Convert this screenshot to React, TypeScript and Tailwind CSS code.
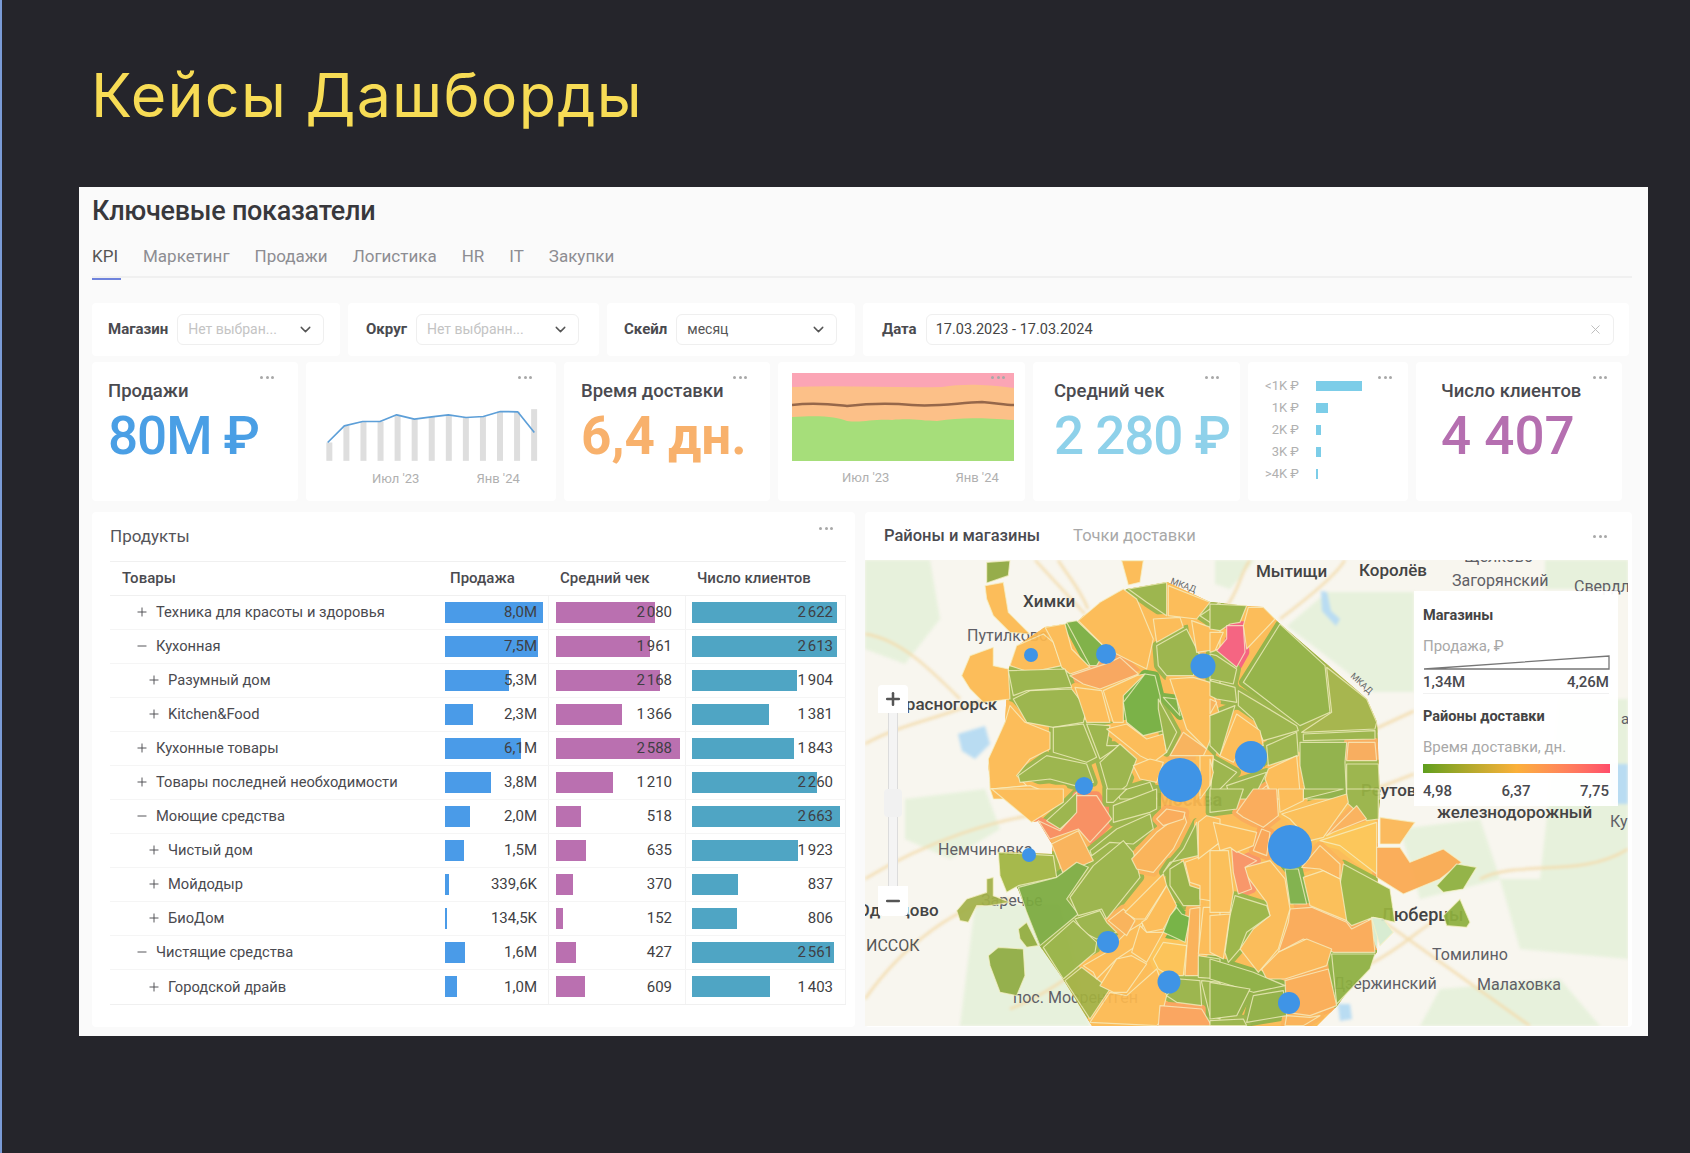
import { ChevronDown, Minus, Plus, X } from "lucide-react";

type Row = { name: string; level: 0 | 1; open?: boolean; sale: string; saleW: number; check: string; checkW: number; clients: string; clientsW: number };

const rows: Row[] = [
  { name: "Техника для красоты и здоровья", level: 0, sale: "8,0М", saleW: 98, check: "2 080", checkW: 99, clients: "2 622", clientsW: 145 },
  { name: "Кухонная", level: 0, open: true, sale: "7,5М", saleW: 93, check: "1 961", checkW: 94, clients: "2 613", clientsW: 145 },
  { name: "Разумный дом", level: 1, sale: "5,3М", saleW: 64, check: "2 168", checkW: 104, clients: "1 904", clientsW: 105 },
  { name: "Kitchen&Food", level: 1, sale: "2,3М", saleW: 28, check: "1 366", checkW: 66, clients: "1 381", clientsW: 77 },
  { name: "Кухонные товары", level: 0, sale: "6,1М", saleW: 76, check: "2 588", checkW: 124, clients: "1 843", clientsW: 102 },
  { name: "Товары последней необходимости", level: 0, sale: "3,8М", saleW: 46, check: "1 210", checkW: 57, clients: "2 260", clientsW: 125 },
  { name: "Моющие средства", level: 0, open: true, sale: "2,0М", saleW: 25, check: "518", checkW: 25, clients: "2 663", clientsW: 148 },
  { name: "Чистый дом", level: 1, sale: "1,5М", saleW: 19, check: "635", checkW: 30, clients: "1 923", clientsW: 106 },
  { name: "Мойдодыр", level: 1, sale: "339,6K", saleW: 4, check: "370", checkW: 17, clients: "837", clientsW: 46 },
  { name: "БиоДом", level: 1, sale: "134,5K", saleW: 2, check: "152", checkW: 7, clients: "806", clientsW: 45 },
  { name: "Чистящие средства", level: 0, open: true, sale: "1,6М", saleW: 20, check: "427", checkW: 20, clients: "2 561", clientsW: 142 },
  { name: "Городской драйв", level: 1, sale: "1,0М", saleW: 12, check: "609", checkW: 29, clients: "1 403", clientsW: 78 },
];

const O = "#fdb94f";
const Y = "#fdc14f";
const A = "#fba853";
const G = "#97b243";
const D = "#78ad3e";

type Shape = [string, string];

const topLeft: Shape[] = [
  ["#8fa83f", "110,10 180,5 175,50 110,72"],
  [O, "105,80 160,70 175,160 240,225 180,220 130,170 110,120"],
  [O, "515,5 580,5 570,70 535,78"],
  [O, "35,350 60,290 130,265 130,320 175,330 180,420 100,430 60,390"],
  [O, "180,320 200,260 280,225 310,250 335,320 240,340"],
  [O, "285,205 345,195 365,270 420,325 360,345 335,325 310,250"],
  [D, "350,190 380,185 470,270 440,320 420,320"],
  [O, "385,185 450,130 520,90 560,120 610,240 590,330 510,290 470,270"],
  ["#f9a357", "360,350 480,310 510,295 565,345 450,390 400,375"],
  [G, "535,90 650,70 650,170 590,130"],
  [O, "655,80 780,130 740,180 655,170"],
  [O, "610,180 690,175 700,205 620,250"],
  [G, "620,260 710,210 750,290 730,350 650,350 625,320"],
  [O, "725,185 810,215 810,270 740,280"],
  [G, "750,170 810,130 810,210"],
  [G, "175,335 345,330 365,385 230,395 190,410"],
  [G, "190,420 240,395 365,390 410,450 400,490 310,505 230,490"],
  [O, "180,440 225,490 300,520 300,570 240,600 200,650 230,680 120,690 115,600 165,490"],
  [O, "375,385 455,395 480,490 410,490"],
  [O, "460,395 560,350 585,345 520,410 520,490 490,490"],
  ["#72ad3c", "520,430 585,345 615,350 630,410 640,515 580,530 530,490"],
  [G, "310,505 400,495 440,595 410,610 310,580"],
  [G, "410,495 480,500 470,560 510,560 450,600"],
  [G, "205,650 290,590 410,615 430,670 375,680 300,660 210,670"],
  [G, "450,610 510,555 560,600 530,680 480,720 470,680"],
  [O, "470,510 530,495 590,540 640,525 650,580 610,610 570,590"],
  [O, "550,620 600,600 640,610 620,670 570,660"],
  ["#f9b055", "660,590 700,520 770,570 760,590 700,590"],
  [O, "660,360 730,355 780,370 810,470 770,570 710,510"],
  [G, "625,420 680,520 650,580 625,450"],
  [D, "640,415 680,420 690,470"],
  [G, "780,360 810,360 810,420"],
  [G, "780,470 810,500 810,580"],
  [O, "750,590 790,590 780,680 750,720"],
  [O, "120,690 240,680 340,720 130,720"],
  [G, "500,700 600,670 620,720 510,720"],
];

const topRight: Shape[] = [
  [G, "0,135 110,140 90,190 60,195 30,215 0,210"],
  [O, "115,145 160,145 195,180 110,270 100,200"],
  ["#f55b7a", "50,200 100,200 105,280 80,325 20,275 50,240"],
  [O, "0,220 40,220 15,275 0,280"],
  ["#8fb03f", "100,370 210,195 345,320 360,460 270,500"],
  ["#a1b243", "350,325 470,420 500,490 495,510 275,520 365,460"],
  [G, "0,285 20,290 80,330 70,375 0,360"],
  [G, "0,365 75,385 80,430 20,420 0,410"],
  [G, "85,395 260,500 265,515 160,545 130,480 85,440"],
  [G, "280,525 495,515 495,540 280,545"],
  ["#8cae42", "270,550 410,550 405,610 410,720 290,720 270,620"],
  ["#f9a956", "415,550 495,550 500,605 410,605"],
  [G, "410,615 505,615 510,720 410,720"],
  [G, "0,470 75,440 30,590 0,560"],
  [O, "30,590 80,465 150,515 160,560 100,560 70,610"],
  ["#f9b055", "0,420 20,430 0,465"],
  [G, "170,560 260,520 265,590 175,620"],
  [O, "175,630 260,590 270,700 285,720 190,720 165,660"],
  [G, "10,600 80,640 50,670 0,720"],
  [G, "50,680 170,640 130,720 60,720"],
  [A, "120,720 170,680 190,720"],
  [O, "0,600 10,640 0,680"],
];

const bottomLeft: Shape[] = [
  [O, "125,0 340,0 340,40 245,100"],
  [G, "290,95 350,40 380,10 385,70 330,120"],
  ["#f88a5a", "380,20 440,20 485,90 420,160 385,120 300,150 265,95 330,125 380,70"],
  [G, "470,0 530,0 490,40 470,40"],
  [G, "490,50 620,0 620,60 600,70 490,100"],
  ["#fab052", "305,165 385,125 430,215 340,255"],
  [G, "420,185 500,120 600,75 610,120 550,165 480,160 425,200"],
  ["#a0b540", "145,190 310,200 320,265 205,290 170,310 150,260"],
  ["#7cab3f", "205,295 320,265 380,220 415,235 350,330 385,375 270,470 230,370"],
  [G, "360,325 430,230 520,155 550,190 570,265 470,390 455,360 385,380"],
  [G, "375,390 450,365 470,400 500,430 440,450 400,430"],
  [G, "280,475 370,395 440,460 435,490 340,570"],
  ["#a3b040", "345,575 395,535 480,600 420,690"],
  [O, "420,700 480,610 530,620 620,540 650,620 630,700 620,710"],
  [O, "400,530 470,490 530,430 580,400 560,470 500,510 440,570 430,550"],
  ["#fab052", "475,395 520,360 555,395 530,440"],
  [O, "525,370 640,255 650,290 585,390 555,390"],
  [O, "590,390 650,290 680,350 640,420 590,430 575,400"],
  ["#fbb050", "545,210 620,130 700,70 710,100 670,180 610,250 560,240"],
  [A, "620,90 650,60 705,70 700,90 640,110"],
  [G, "640,250 700,180 740,100 745,200 700,210 660,220"],
  ["#93b03f", "660,240 700,215 720,290 750,300 750,350 700,350 660,290"],
  ["#6fb03c", "680,355 695,375 720,385 705,460 640,430 660,380"],
  ["#fbaf51", "720,360 750,355 745,560 705,560 710,480"],
  [O, "570,410 590,430 640,430 590,520 545,490"],
  [Y, "610,510 640,460 710,470 700,560 660,560 625,540"],
  [O, "450,590 500,510 545,500 590,525 530,610 490,610"],
  [G, "650,620 690,570 750,575 755,650 680,640"],
  [G, "755,575 810,580 810,690 780,680 755,580"],
  [G, "745,500 810,510 810,570 745,565"],
  ["#fba057", "630,650 755,660 785,710 625,710"],
  [O, "705,220 745,205 810,160 810,340 750,330 750,290 720,280"],
  [O, "745,100 770,80 810,90 810,160 745,210"],
  [O, "760,355 810,355 810,500 745,495"],
  ["#a3b14a", "20,365 50,330 110,310 110,270 130,265 130,320 180,340 120,350 80,350 55,400 30,395"],
  ["#93ad40", "205,420 230,400 265,470 230,475 210,450"],
  ["#8fac43", "115,500 145,475 220,480 225,560 200,620 150,610 120,530"],
];

const bottomRight: Shape[] = [
  [G, "280,0 400,0 280,30"],
  [G, "410,0 505,0 505,90 470,95 410,40"],
  [G, "0,0 100,0 80,60 0,70"],
  [A, "80,70 130,0 200,0 205,80 160,115 100,85"],
  [O, "205,0 280,0 280,35 210,70"],
  ["#fcbc50", "215,75 410,15 415,40 340,145 300,155 240,90"],
  ["#fbae56", "350,140 440,50 470,90 370,130"],
  ["#fdc450", "330,155 500,100 500,255 390,170"],
  ["#fcb654", "510,85 615,100 570,165 510,165"],
  ["#fba950", "500,175 570,175 600,220 700,180 755,220 690,270 580,315 500,265"],
  ["#98b33f", "400,225 540,300 555,400 490,385 425,410 385,370 380,350"],
  ["#fcb150", "275,235 330,170 390,225 390,270 330,240"],
  ["#fcbc50", "280,265 340,245 390,270 410,395 300,350"],
  ["#7bae44", "225,240 265,240 290,345 240,345"],
  [A, "240,360 305,355 410,400 425,420 485,390 495,490 370,490 280,450 205,490 235,400"],
  ["#fcb450", "155,540 205,490 290,450 365,480 350,530 225,570 170,570"],
  ["#fbaa50", "225,575 355,540 380,650 300,680 230,670"],
  ["#8db040", "365,495 495,495 480,540 380,645"],
  ["#fcb950", "105,235 180,215 225,270 240,360 205,480 145,550 90,480 130,420 180,380 170,340 110,260"],
  ["#f99060", "65,180 140,215 105,235 125,300 85,315 70,250"],
  [O, "10,100 140,130 130,170 80,190 60,175 30,185"],
  ["#fcbc50", "0,185 55,185 70,310 60,370 0,370"],
  ["#97b340", "75,320 170,350 180,380 110,430 90,480 55,520 45,490 60,380"],
  ["#fcb950", "0,380 60,375 40,510 0,490"],
  ["#8aad3e", "0,510 50,525 130,550 225,590 130,610 0,570"],
  ["#8dad3f", "0,580 120,600 80,680 0,690"],
  ["#8dad3f", "130,620 220,605 230,680 110,700"],
  [G, "0,695 100,690 110,710 0,710"],
  ["#fbb050", "230,680 300,685 330,680 280,710 225,710"],
  ["#fba350", "155,120 180,130 170,200 130,185"],
  ["#8eb03e", "680,290 740,225 800,235 760,300 700,310"],
  ["#8eb03e", "700,380 750,330 780,400 770,415 710,410"],
  ["#d6ecd0", "485,385 520,390 550,430 510,470 495,420"],
];

const moscow =
  "1083,617 1127,590 1167,583 1210,603 1247,607 1263,608 1278,623 1367,700 1377,723 1380,800 1378,820 1377,953 1337,1007 1317,1027 1092,1027 1063,980 1040,947 1018,890 1005,870 998,853 1052,855 1052,845 1038,822 1032,823 992,790 988,767 1005,723 1008,672 1017,647 1045,628 1065,625 1078,622";

const pins = [
  [1031, 656, 7], [1106, 655, 10], [1203, 667, 12.5], [1180, 781, 22], [1084, 787, 9], [1251, 758, 16],
  [1029, 856, 7], [1108, 943, 11], [1169, 983, 11.5], [1290, 848, 22], [1289, 1004, 11],
];

const sparkline = [235, 185, 172, 172, 152, 165, 158, 152, 160, 157, 142, 143, 135];

function Dots({ className }: { className: string }) {
  return (
    <div className={`absolute flex gap-[2.5px] ${className}`}>
      <span className="h-[3px] w-[3px] rounded-full bg-[#a8a8a8]" />
      <span className="h-[3px] w-[3px] rounded-full bg-[#a8a8a8]" />
      <span className="h-[3px] w-[3px] rounded-full bg-[#a8a8a8]" />
    </div>
  );
}

function Select({ text, muted, width }: { text: string; muted?: boolean; width: string }) {
  return (
    <div className={`flex h-[31px] items-center justify-between rounded-md border border-[#efefef] bg-white pl-[10px] pr-[9px] ${width}`}>
      <span className={`text-[14px] ${muted ? "text-[#c4c4c4]" : "text-[#555]"}`}>{text}</span>
      <ChevronDown size={17} strokeWidth={2} className="text-[#555]" />
    </div>
  );
}

function Bar({ label, width, color, left, right }: { label: string; width: number; color: string; left: string; right: string }) {
  return (
    <div className="relative flex h-full items-center justify-end border-r border-[#f3f3f3]">
      <div className={`absolute top-[6px] h-[21px] ${left} ${color}`} style={{ width }} />
      <span className={`relative text-[15px] text-[#3f3f44] [word-spacing:-2px] ${right}`}>{label}</span>
    </div>
  );
}

function ProductTable() {
  return (
    <div className="mt-[13px] w-[736px] border-t border-b border-[#f0f0f0]">
      <div className="grid h-[34px] grid-cols-[326px_113px_137px_160px] items-center border-b border-[#f0f0f0] text-[15px] font-medium text-[#4a4a4f]">
        <span className="pl-[12px]">Товары</span>
        <span className="pl-[14px]">Продажа</span>
        <span className="pl-[11px]">Средний чек</span>
        <span className="pl-[11px]">Число клиентов</span>
      </div>
      {rows.map((row) => (
        <div key={row.name} className="grid h-[34px] grid-cols-[326px_113px_137px_160px] items-center border-b border-[#f5f5f5] last:border-b-0">
          <div className={`flex items-center gap-[7px] text-[14.7px] text-[#4a4a4f] ${row.level === 1 ? "pl-[37px]" : "pl-[25px]"}`}>
            {row.open ? <Minus size={14} strokeWidth={1.6} /> : <Plus size={14} strokeWidth={1.6} />}
            <span>{row.name}</span>
          </div>
          <Bar label={row.sale} width={row.saleW} color="bg-[#4a9be8]" left="left-[9px]" right="mr-[11px]" />
          <Bar label={row.check} width={row.checkW} color="bg-[#ba70b0]" left="left-[7px]" right="mr-[13px]" />
          <Bar label={row.clients} width={row.clientsW} color="bg-[#4fa5c4]" left="left-[6px]" right="mr-[12px]" />
        </div>
      ))}
    </div>
  );
}

function Districts({ x, y, shapes, grow }: { x: number; y: number; shapes: Shape[]; grow?: boolean }) {
  return (
    <g transform={`translate(${x} ${y}) scale(0.3333)`}>
      {shapes.map(([fill, points]) => (
        <polygon
          key={points}
          points={points}
          fill={fill}
          stroke={grow ? fill : "#f6f0c4"}
          strokeOpacity={grow ? 1 : 0.75}
          strokeWidth={grow ? 26 : 3.5}
          strokeLinejoin="round"
        />
      ))}
    </g>
  );
}

function MapLabel({ className, children }: { className: string; children: string }) {
  return <span className={`absolute -translate-y-1/2 whitespace-nowrap ${className}`}>{children}</span>;
}

function MoscowMap() {
  return (
    <div className="relative mt-[12px] h-[466px] w-[763px] overflow-hidden bg-[#f8f6ef]">
      {/* подложка: леса, вода, дороги */}
      <svg viewBox="865 561 763 466" className="absolute inset-0 h-full w-full blur-[1.5px]">
        <g fill="#e7f1dc">
          <polygon points="1287,627 1327,593 1414,593 1414,693 1373,693" />
          <polygon points="865,561 930,561 940,620 905,665 865,650" />
          <polygon points="1215,561 1255,561 1230,590 1215,585" />
          <polygon points="1545,561 1628,561 1628,590 1545,590" />
          <polygon points="905,800 985,790 1000,830 950,860 905,840" />
          <polygon points="975,905 1060,905 1090,1027 960,1027" />
          <polygon points="1560,700 1628,700 1628,880 1540,880" />
          <polygon points="1400,830 1480,820 1500,880 1420,900" />
          <polygon points="1440,990 1560,980 1600,1027 1420,1027" />
          <polygon points="1500,880 1628,880 1628,960 1520,950" />
        </g>
        <g fill="none" stroke="#f3dcae" strokeWidth="2.5">
          <path d="M865 635 C900 640 930 670 960 700" />
          <path d="M865 745 C900 725 940 720 985 700" />
          <path d="M865 880 C930 840 1000 820 1040 815" />
          <path d="M865 1000 C900 950 960 900 1010 900" />
          <path d="M1010 1010 C1060 990 1090 960 1120 940" />
          <path d="M1035 561 L1085 615" />
          <path d="M1058 561 C1070 580 1080 590 1088 610" />
          <path d="M1225 610 C1240 590 1240 575 1250 561" />
          <path d="M1280 620 C1320 590 1340 570 1345 561" />
          <path d="M1375 730 L1414 712" />
          <path d="M1375 790 L1414 775" />
          <path d="M1380 920 L1530 1027" />
          <path d="M1480 880 C1520 860 1580 880 1628 850" />
          <path d="M1370 965 C1400 950 1420 930 1430 925" />
        </g>
        <g fill="#b9dcf2">
          <path d="M1321 592 L1327 593 L1331 612 L1340 620 L1336 627 L1322 612 Z" />
          <path d="M958 735 L985 727 L990 745 L975 760 L962 752 Z" />
          <path d="M1338 1005 L1350 1005 L1352 1020 L1340 1022 Z" />
          <rect x="1612" y="765" width="16" height="40" />
        </g>
      </svg>
      <MapLabel className="left-[102px] top-[76px] text-[16px] text-[#5f5f66]">Путилково</MapLabel>
      <MapLabel className="left-[30px] top-[145px] text-[17px] font-medium text-[#444]">Красногорск</MapLabel>
      <MapLabel className="left-[73px] top-[290px] text-[16px] text-[#5f5f66]">Немчиновка</MapLabel>
      <MapLabel className="left-[116px] top-[341px] text-[16px] text-[#5f5f66]">Заречье</MapLabel>
      <MapLabel className="left-[148px] top-[438px] text-[16px] text-[#5f5f66]">пос. Мосрентген</MapLabel>
      <MapLabel className="left-[468px] top-[424px] text-[16px] text-[#5f5f66]">Дзержинский</MapLabel>
      <MapLabel className="left-[516px] top-[354px] text-[18px] font-medium text-[#444]">Люберцы</MapLabel>
      <MapLabel className="left-[496px] top-[231px] text-[17px] font-medium text-[#444]">Реутов</MapLabel>
      <MapLabel className="left-[292px] top-[239px] text-[18px] font-bold text-[#555]">Москва</MapLabel>
      <svg viewBox="865 561 763 466" className="absolute inset-0 h-full w-full opacity-[0.93] blur-[0.6px]">
        <defs>
          <clipPath id="moscow">
            <polygon points={moscow} />
          </clipPath>
        </defs>
        <polygon points={moscow} fill="#fcb950" />
        <g clipPath="url(#moscow)">
          <Districts x={950} y={560} shapes={topLeft} grow />
          <Districts x={1210} y={560} shapes={topRight} grow />
          <Districts x={950} y={790} shapes={bottomLeft} grow />
          <Districts x={1210} y={790} shapes={bottomRight} grow />
        </g>
        <Districts x={950} y={560} shapes={topLeft} />
        <Districts x={1210} y={560} shapes={topRight} />
        <Districts x={950} y={790} shapes={bottomLeft} />
        <Districts x={1210} y={790} shapes={bottomRight} />
      </svg>
      <svg viewBox="865 561 763 466" className="absolute inset-0 h-full w-full">
        {pins.map(([cx, cy, r]) => (
          <circle key={`${cx}-${cy}`} cx={cx} cy={cy} r={r} fill="#3f94e6" />
        ))}
      </svg>
      <MapLabel className="left-[599px] top-[-3px] text-[16px] text-[#5f5f66]">Щёлково</MapLabel>
      <MapLabel className="left-[391px] top-[12px] text-[17px] font-medium text-[#444]">Мытищи</MapLabel>
      <MapLabel className="left-[494px] top-[11px] text-[17px] font-medium text-[#444]">Королёв</MapLabel>
      <MapLabel className="left-[587px] top-[21px] text-[16px] text-[#5f5f66]">Загорянский</MapLabel>
      <MapLabel className="left-[709px] top-[27px] text-[16px] text-[#5f5f66]">Свердловский</MapLabel>
      <MapLabel className="left-[158px] top-[42px] text-[17px] font-medium text-[#444]">Химки</MapLabel>
      <MapLabel className="left-[-7px] top-[351px] text-[17px] font-medium text-[#444]">Одинцово</MapLabel>
      <MapLabel className="left-[1px] top-[386px] text-[16px] text-[#555]">ИССОК</MapLabel>
      <MapLabel className="left-[567px] top-[395px] text-[16px] text-[#5f5f66]">Томилино</MapLabel>
      <MapLabel className="left-[612px] top-[425px] text-[16px] text-[#5f5f66]">Малаховка</MapLabel>
      <MapLabel className="left-[305px] top-[26px] rotate-[20deg] text-[9px] text-[#666]">МКАД</MapLabel>
      <MapLabel className="left-[483px] top-[124px] rotate-[42deg] text-[9px] text-[#666]">МКАД</MapLabel>
      {/* зум */}
      <div className="absolute left-[13px] top-[125px] flex h-[231px] w-[30px] flex-col items-center">
        <div className="flex h-[28px] w-[30px] items-center justify-center rounded-t bg-white">
          <Plus size={20} strokeWidth={3} className="text-[#555]" />
        </div>
        <div className="relative w-[10px] flex-1 border-x border-[#dcdcdc] bg-[#f4f4f4]">
          <div className="absolute left-[-5px] top-[76px] h-[28px] w-[18px] rounded-sm bg-[#f1f1f1]" />
        </div>
        <div className="flex h-[30px] w-[30px] items-center justify-center rounded-b bg-white">
          <Minus size={20} strokeWidth={3} className="text-[#555]" />
        </div>
      </div>
      {/* легенда */}
      <div className="absolute left-[549px] top-[31px] w-[204px] bg-white/95 px-[9px]">
        <div className="flex h-[103px] flex-col border-b border-[#f1f1f1]">
          <span className="mt-[16px] text-[14.5px] font-bold leading-[18px] text-[#444]">Магазины</span>
          <span className="mt-[12px] text-[15px] leading-[18px] text-[#a8a8a8]">Продажа, ₽</span>
          <svg viewBox="0 0 187 15" className="h-[15px] w-[187px]">
            <polygon points="1,14 186,1 186,14" fill="#fff" stroke="#777" strokeWidth="1.3" />
          </svg>
          <div className="mt-[3px] flex justify-between text-[15px] font-medium leading-[18px] text-[#4a4a4f]">
            <span>1,34М</span>
            <span>4,26М</span>
          </div>
        </div>
        <div className="flex h-[112px] flex-col">
          <span className="mt-[14px] text-[14.5px] font-bold leading-[18px] text-[#444]">Районы доставки</span>
          <span className="mt-[12px] text-[15px] leading-[18px] text-[#a8a8a8]">Время доставки, дн.</span>
          <div className="mt-[8px] h-[9px] w-[187px] bg-gradient-to-r from-[#5e9e1e] via-[#fbb03a] to-[#ff4d6a]" />
          <div className="mt-[9px] flex justify-between text-[15px] font-medium leading-[18px] text-[#4a4a4f]">
            <span>4,98</span>
            <span>6,37</span>
            <span>7,75</span>
          </div>
        </div>
      </div>
      <MapLabel className="left-[572px] top-[253px] text-[17px] font-medium text-[#444]">железнодорожный</MapLabel>
      <MapLabel className="left-[745px] top-[262px] text-[16px] text-[#5f5f66]">Купавна</MapLabel>
      <MapLabel className="left-[756px] top-[159px] text-[15px] text-[#5f5f66]">а</MapLabel>
    </div>
  );
}

export default function App() {
  return (
    <div className="h-[1153px] w-[1690px] overflow-hidden border-l-2 border-[#7a9bd6] bg-[#25252b] font-['Roboto',sans-serif]">
      <h1 className="ml-[89px] pt-[58px] font-['Inter',sans-serif] text-[61px] font-normal leading-[74px] tracking-[0.02em] text-[#f7dc55]">
        Кейсы Дашборды
      </h1>
      <div className="ml-[77px] mt-[55px] h-[849px] w-[1569px] bg-[#fafafa] px-[13px]">
        <h2 className="pt-[8px] text-[27px] font-medium leading-[32px] tracking-[-0.01em] text-[#38383c]">Ключевые показатели</h2>
        <div className="mr-[3px] mt-[16px] flex h-[35px] items-start gap-[25px] border-b-2 border-[#f0f0f0] text-[17px] leading-[26px] text-[#8d8d92]">
          <span className="relative h-[35px] text-[#555] after:absolute after:bottom-[-2px] after:left-0 after:h-[2px] after:w-[29px] after:bg-[#6f83dc]">KPI</span>
          <span>Маркетинг</span>
          <span>Продажи</span>
          <span>Логистика</span>
          <span>HR</span>
          <span>IT</span>
          <span>Закупки</span>
        </div>

        <div className="mt-[25px] flex h-[53px] gap-[8px]">
          <div className="flex w-[248px] items-center gap-[9px] rounded bg-white pl-[16px]">
            <span className="text-[15px] font-bold text-[#4a4a4f]">Магазин</span>
            <Select text="Нет выбран..." muted width="w-[147px]" />
          </div>
          <div className="flex w-[251px] items-center gap-[9px] rounded bg-white pl-[18px]">
            <span className="text-[15px] font-bold text-[#4a4a4f]">Округ</span>
            <Select text="Нет выбранн..." muted width="w-[163px]" />
          </div>
          <div className="flex w-[248px] items-center gap-[9px] rounded bg-white pl-[17px]">
            <span className="text-[15px] font-bold text-[#4a4a4f]">Скейл</span>
            <Select text="месяц" width="w-[161px]" />
          </div>
          <div className="flex w-[766px] items-center gap-[9px] rounded bg-white pl-[19px]">
            <span className="text-[15px] font-bold text-[#4a4a4f]">Дата</span>
            <div className="flex h-[31px] w-[688px] items-center justify-between rounded-md border border-[#efefef] bg-white pl-[9px] pr-[10px] text-[14.5px] text-[#444]">
              <span>17.03.2023 - 17.03.2024</span>
              <X size={15} strokeWidth={1.5} className="text-[#bbb]" />
            </div>
          </div>
        </div>

        <div className="mt-[6px] flex h-[139px] gap-[8px]">
          <div className="relative w-[206px] rounded bg-white pl-[16px] pt-[16px]">
            <Dots className="left-[168px] top-[14px]" />
            <div className="text-[18.5px] font-medium leading-[26px] text-[#4a4a4f]">Продажи</div>
            <div className="mt-[2px] text-[53px] font-medium leading-[60px] tracking-[-0.02em] text-[#4a9fe5]">80М ₽</div>
          </div>
          <div className="relative w-[250px] rounded bg-white">
            <Dots className="left-[212px] top-[14px]" />
            <svg viewBox="0 0 810 320" className="ml-[-5px] mt-[2px] h-[107px] w-[270px]">
              <g fill="#dedede">
                {sparkline.map((top, i) => (
                  <rect key={i} x={76 + i * 51.2} y={top} width="18" height={290 - top} />
                ))}
              </g>
              <polyline
                points="80,235 130,185 185,172 237,172 287,152 340,165 392,158 442,152 495,160 547,157 598,142 650,143 700,205"
                fill="none"
                stroke="#5d9fd8"
                strokeWidth="5"
                strokeLinejoin="round"
              />
            </svg>
            <div className="mt-[-2px] flex gap-[57px] pl-[66px] text-[13px] text-[#b0b0b0]">
              <span>Июл '23</span>
              <span>Янв '24</span>
            </div>
          </div>
          <div className="relative w-[206px] rounded bg-white pl-[17px] pt-[16px]">
            <Dots className="left-[169px] top-[14px]" />
            <div className="text-[18.5px] font-medium leading-[26px] text-[#4a4a4f]">Время доставки</div>
            <div className="mt-[2px] text-[53px] font-bold leading-[60px] text-[#f8b16c]">6,4 дн.</div>
          </div>
          <div className="relative w-[247px] rounded bg-white">
            <Dots className="left-[213px] top-[14px]" />
            <svg viewBox="0 0 222 88" preserveAspectRatio="none" className="ml-[14px] mt-[11px] h-[88px] w-[222px]">
              <rect width="222" height="88" fill="#a6de7a" />
              <path d="M0 44 C30 42 45 44 55 48 C70 50 80 46 100 47 C120 45 130 48 145 48 C170 44 190 45 222 47 L222 0 L0 0 Z" fill="#fcc088" />
              <path d="M0 14 C50 12 100 15 150 14 C170 11 190 11 222 15 L222 0 L0 0 Z" fill="#fba5b5" />
              <path d="M0 32 C25 29 45 32 55 33 C80 30 100 30 120 32 C145 34 165 30 190 29 C205 30 212 32 222 32" fill="none" stroke="#96674a" strokeWidth="2.5" />
            </svg>
            <div className="mt-[7px] flex gap-[66px] pl-[64px] text-[13px] text-[#b0b0b0]">
              <span>Июл '23</span>
              <span>Янв '24</span>
            </div>
          </div>
          <div className="relative w-[207px] rounded bg-white pl-[21px] pt-[16px]">
            <Dots className="left-[172px] top-[14px]" />
            <div className="text-[18.5px] font-medium leading-[26px] text-[#4a4a4f]">Средний чек</div>
            <div className="mt-[2px] whitespace-nowrap text-[53px] font-medium leading-[60px] tracking-[-0.02em] text-[#8ed1ea]">2 280 ₽</div>
          </div>
          <div className="relative w-[160px] rounded bg-white pt-[18px]">
            <Dots className="left-[130px] top-[14px]" />
            <div className="flex flex-col gap-[11px]">
              {[["<1K ₽", 46], ["1K ₽", 12], ["2K ₽", 5], ["3K ₽", 5], [">4K ₽", 2]].map(([label, width]) => (
                <div key={label} className="flex h-[11px] items-center">
                  <span className="w-[51px] text-right text-[13px] text-[#b0b0b0]">{label}</span>
                  <div className="ml-[17px] h-[10px] bg-[#7ccde8]" style={{ width: Number(width) }} />
                </div>
              ))}
            </div>
          </div>
          <div className="relative w-[206px] rounded bg-white pl-[25px] pt-[16px]">
            <Dots className="left-[177px] top-[14px]" />
            <div className="text-[18.5px] font-medium leading-[26px] text-[#4a4a4f]">Число клиентов</div>
            <div className="mt-[2px] text-[53px] font-medium leading-[60px] text-[#b56fb0]">4 407</div>
          </div>
        </div>

        <div className="mt-[11px] flex h-[515px] gap-[10px]">
          <div className="relative w-[763px] rounded bg-white pl-[18px] pt-[12px]">
            <Dots className="left-[727px] top-[15px]" />
            <div className="text-[17px] leading-[24px] text-[#55555a]">Продукты</div>
            <ProductTable />
          </div>
          <div className="relative w-[767px] rounded bg-white pt-[12px]">
            <Dots className="left-[728px] top-[23px]" />
            <div className="flex gap-[33px] pl-[19px] text-[16.5px] leading-[24px]">
              <span className="font-medium text-[#4a4a4f]">Районы и магазины</span>
              <span className="text-[#a8a8a8]">Точки доставки</span>
            </div>
            <MoscowMap />
          </div>
        </div>
      </div>
    </div>
  );
}
